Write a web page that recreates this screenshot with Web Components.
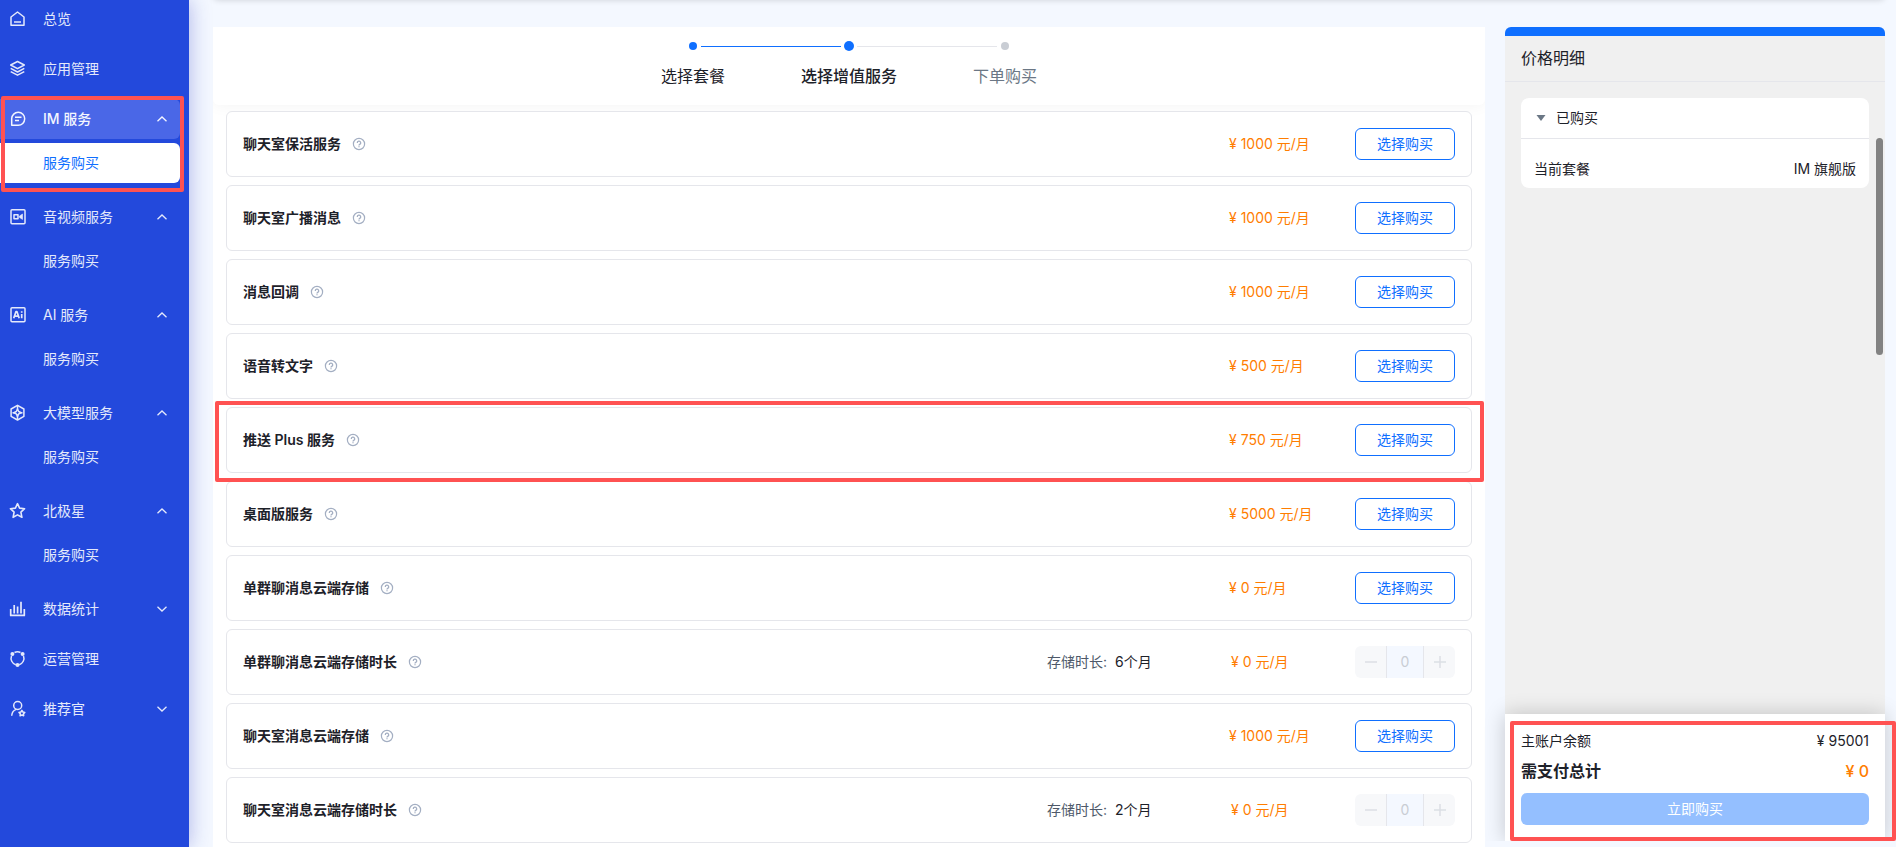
<!DOCTYPE html>
<html lang="zh-CN">
<head>
<meta charset="utf-8">
<title>服务购买</title>
<style>
  html, body {
    height: 100%;
    margin: 0;
  }
  body {
    font-family: Inter, "Noto Sans CJK SC", sans-serif;
    font-size: 14px;
    line-height: 22px;
    color: #1d2129;
    background: #f4f8ff;
    overflow: hidden;
  }
</style>
</head>
<body>
<console-layout>
  <side-nav slot="nav">
    <nav-item icon="home">总览</nav-item>
    <nav-item icon="layers">应用管理</nav-item>
    <nav-group icon="chat" label="IM 服务" open active marked><a-sub current>服务购买</a-sub></nav-group>
    <nav-group icon="video" label="音视频服务" open><a-sub>服务购买</a-sub></nav-group>
    <nav-group icon="ai" label="AI 服务" open><a-sub>服务购买</a-sub></nav-group>
    <nav-group icon="model" label="大模型服务" open><a-sub>服务购买</a-sub></nav-group>
    <nav-group icon="star" label="北极星" open><a-sub>服务购买</a-sub></nav-group>
    <nav-group icon="chart" label="数据统计"></nav-group>
    <nav-item icon="cycle">运营管理</nav-item>
    <nav-group icon="user" label="推荐官"></nav-group>
  </side-nav>

  <step-bar>
    <step-dot state="done">选择套餐</step-dot>
    <step-dot state="current">选择增值服务</step-dot>
    <step-dot state="wait">下单购买</step-dot>
  </step-bar>
  <service-list>
    <service-card price="1000">聊天室保活服务</service-card>
    <service-card price="1000">聊天室广播消息</service-card>
    <service-card price="1000">消息回调</service-card>
    <service-card price="500">语音转文字</service-card>
    <service-card price="750" marked>推送 Plus 服务</service-card>
    <service-card price="5000">桌面版服务</service-card>
    <service-card price="0">单群聊消息云端存储</service-card>
    <service-card price="0" duration="6个月">单群聊消息云端存储时长</service-card>
    <service-card price="1000">聊天室消息云端存储</service-card>
    <service-card price="0" duration="2个月">聊天室消息云端存储时长</service-card>
  </service-list>

  <price-panel slot="aside" heading="价格明细">
    <bought-card heading="已购买">
      <span slot="name">当前套餐</span>
      <span slot="value">IM 旗舰版</span>
    </bought-card>
    <pay-footer slot="footer" balance="95001" total="0"></pay-footer>
  </price-panel>
</console-layout>

<script>
const ICONS = {
  home: '<path d="M2 7 8.500 2 15 7v8.200H2z"/><path d="M5 12h7"/>',
  layers: '<path d="M8.500 1.500 15.300 5 8.500 8.700 1.700 5z"/><path d="M1.700 8.400 8.500 12l6.800-3.600M1.700 11.600l6.800 3.600 6.800-3.600"/>',
  chat: '<path d="M2.700 15.300V8.600a6.500 6.500 0 1 1 6.500 6.700z"/><path d="M6 7.200h6.500M6 10.400h4"/>',
  video: '<rect x="2" y="1.700" width="14" height="14" rx="1"/><path d="M5 6.700h4v4H5z"/><path d="M13.500 6v5.400l-3-2v-1.400z" fill="currentColor" stroke-width=".6"/>',
  ai: '<rect x="2" y="1.700" width="14" height="14" rx="1"/><path d="M4.700 12.200 7 5.500h.9l2.300 6.700M5.500 10.200h3.900M12.700 8v4.200M12.700 5.200v1.500" stroke-width="1.700"/>',
  model: '<path d="M8.500 1.300 14.900 5v7.300L8.500 16l-6.400-3.700V5z"/><path d="M8.500 1.500v4M8.500 12v4M3.500 8.700h3M10.500 8.700h3"/><path d="M8.500 5 9.700 7.500 12.200 8.700 9.700 9.900 8.500 12.400 7.300 9.900 4.800 8.700 7.300 7.500z"/>',
  star: '<path d="M8.500 1.600 10.600 6.100 15.600 6.700 11.900 10.100 12.900 15.300 8.500 12.900 4.100 15.300 5.100 10.100 1.400 6.700 6.400 6.100z" stroke-width="1.600"/>',
  chart: '<path d="M1.700 9v6.400h13.600V9M5.200 13.400V5M8.600 13.400V6.500M12 13.400V1.700" stroke-width="1.700"/>',
  cycle: '<path d="M5.500 2.500a6.600 6.600 0 0 1 6 0M14.500 6a6.600 6.600 0 0 1-4.300 8.700M6.800 14.700A6.600 6.600 0 0 1 2.500 6"/><g fill="currentColor" stroke="none"><circle cx="3.400" cy="4" r="2"/><circle cx="13.600" cy="4" r="2"/><circle cx="8.500" cy="15" r="2"/></g>',
  user: '<circle cx="8.700" cy="5.500" r="4"/><path d="M2.700 15.800c.2-3.400 2-5.600 4.700-6.400"/><path d="M12.900 10.300 13.900 12 15.800 12.400 14.500 13.800 14.700 15.700 12.900 15 11.100 15.700 11.300 13.800 10 12.400 11.900 12z"/>'
};

function icon(name) {
  return `<svg class="icon" viewBox="0 0 18 18" width="18" height="18" fill="none" stroke="currentColor" stroke-width="1.500" stroke-linejoin="round" aria-hidden="true">${ICONS[name]}</svg>`;
}

// Shared by every nav row, whether it is a link or an expander
const ROW_STYLE = `
  .row {
    box-sizing: border-box;
    display: flex;
    align-items: center;
    width: 100%;
    height: 40px;
    padding: 0 13px 0 9px;
    border: 0;
    border-radius: 0 6px 6px 0;
    background: none;
    color: #e4e9fb;
    font: inherit;
    text-align: left;
    text-decoration: none;
    cursor: pointer;
  }
  .icon {
    flex: none;
    margin-right: 16px;
  }
`;

// Red frame that highlights a part of the page
const MARK_STYLE = `
  .mark {
    position: absolute;
    border: 4px solid #ff5252;
    border-radius: 2px;
    pointer-events: none;
    z-index: 5;
  }
`;

class BaseElement extends HTMLElement {
  constructor() {
    super();
    this.attachShadow({ mode: 'open' });
  }

  connectedCallback() {
    this.shadowRoot.innerHTML = this.template();
  }
}

class ConsoleLayout extends BaseElement {
  template() {
    return `
      <style>
        :host {
          display: grid;
          grid-template-columns: 189px minmax(0, 1fr);
          height: 100vh;
        }
        .page {
          box-sizing: border-box;
          display: grid;
          grid-template-columns: minmax(0, 1fr) 380px;
          grid-template-rows: minmax(0, 1fr);
          gap: 20px;
          height: 100vh;
          padding: 27px 11px 0 24px;
          position: relative;
        }
        .topbar {
          position: absolute;
          left: 24px;
          right: 11px;
          top: -10px;
          height: 10px;
          border-radius: 6px;
          box-shadow: 0 0 6px rgba(0, 0, 0, 0.16);
        }
        main {
          background: #fff;
          overflow: hidden;
        }
        aside {
          min-height: 0;
          padding-bottom: 6px;
        }
      </style>
      <slot name="nav"></slot>
      <div class="page">
        <div class="topbar"></div>
        <main><slot></slot></main>
        <aside><slot name="aside"></slot></aside>
      </div>
    `;
  }
}

class SideNav extends BaseElement {
  template() {
    return `
      <style>
        :host {
          display: block;
          background: #2349dc;
          box-shadow: 0 0 20px rgba(35, 50, 190, 0.35);
          position: relative;
          z-index: 1;
        }
        nav {
          display: flex;
          flex-direction: column;
          gap: 10px;
          margin-top: -1px;
          padding-right: 9px;
        }
      </style>
      <nav><slot></slot></nav>
    `;
  }
}

class NavItem extends BaseElement {
  template() {
    return `
      <style>
        :host { display: block; }
        ${ROW_STYLE}
      </style>
      <a class="row" href="#">${icon(this.getAttribute('icon'))}<slot></slot></a>
    `;
  }
}

class NavGroup extends BaseElement {
  template() {
    const open = this.hasAttribute('open');
    return `
      <style>
        :host {
          display: block;
          position: relative;
        }
        :host([open]) { padding-bottom: 4px; }
        :host(:not([open])) slot { display: none; }
        ${ROW_STYLE}
        ${MARK_STYLE}
        :host([active]) .row {
          background: #4a67e7;
          color: #f4f6ff;
          font-weight: 500;
        }
        .label { flex: 1; }
        .mark { inset: -3px -4px -5px 1px; }
      </style>
      <button class="row" type="button" aria-expanded="${open}">
        ${icon(this.getAttribute('icon'))}
        <span class="label">${this.getAttribute('label')}</span>
        <svg width="10" height="6" viewBox="0 0 10 6" fill="none" stroke="currentColor" stroke-width="1.300" aria-hidden="true">
          <path d="${open ? 'M.5 5.300 5 1l4.500 4.300' : 'M.5.700 5 5 9.500.700'}"/>
        </svg>
      </button>
      <slot></slot>
      ${this.hasAttribute('marked') ? '<div class="mark"></div>' : ''}
    `;
  }

  connectedCallback() {
    super.connectedCallback();
    this.shadowRoot.querySelector('button').addEventListener('click', () => {
      this.toggleAttribute('open');
      this.connectedCallback();
    });
  }
}

class SubLink extends BaseElement {
  template() {
    return `
      <style>
        :host {
          display: block;
          margin-top: 4px;
        }
        a {
          display: block;
          padding: 9px 0 9px 43px;
          border-radius: 0 6px 6px 0;
          color: #e4e9fb;
          text-decoration: none;
        }
        :host([current]) a {
          background: #fff;
          color: #0f6fff;
        }
      </style>
      <a href="#"><slot></slot></a>
    `;
  }
}

class StepBar extends BaseElement {
  template() {
    return `
      <style>
        :host {
          display: grid;
          grid-template-columns: repeat(3, 156px);
          justify-content: center;
          padding: 14px 0 18px;
          border-radius: 0 0 6px 6px;
          box-shadow: 0 0 16px rgba(0, 0, 0, 0.05);
          margin-bottom: 6px;
        }
      </style>
      <slot></slot>
    `;
  }
}

class StepDot extends BaseElement {
  template() {
    return `
      <style>
        :host {
          display: grid;
          justify-items: center;
          grid-template-rows: 10px auto;
          row-gap: 14px;
          font-size: 16px;
          line-height: 22px;
          position: relative;
        }
        i {
          align-self: center;
          width: 8px;
          height: 8px;
          border-radius: 50%;
          background: #0f6fff;
        }
        /* connector to the next step */
        :host(:not(:last-child))::after {
          content: "";
          position: absolute;
          top: 5px;
          left: calc(50% + 8px);
          width: calc(100% - 16px);
          height: 1px;
          background: #e5e6eb;
        }
        :host([state="done"])::after { background: #0f6fff !important; }
        :host([state="current"]) { font-weight: 500; }
        :host([state="current"]) i {
          width: 10px;
          height: 10px;
        }
        :host([state="wait"]) { color: #6b7785; }
        :host([state="wait"]) i { background: #c9cdd4; }
      </style>
      <i></i>
      <span><slot></slot></span>
    `;
  }
}

class ServiceList extends BaseElement {
  template() {
    return `
      <style>
        :host {
          display: grid;
          gap: 8px;
          padding: 0 13px;
        }
      </style>
      <slot></slot>
    `;
  }
}

class ServiceCard extends BaseElement {
  action() {
    if (!this.hasAttribute('duration')) {
      return '<button class="buy" type="button">选择购买</button>';
    }
    return `
      <div class="stepper">
        <button type="button" disabled aria-label="减少"><svg width="12" height="12" viewBox="0 0 12 12" stroke="currentColor" stroke-width="1.500"><path d="M0 6h12"/></svg></button>
        <input type="text" value="0" disabled aria-label="数量">
        <button type="button" disabled aria-label="增加"><svg width="12" height="12" viewBox="0 0 12 12" stroke="currentColor" stroke-width="1.500"><path d="M0 6h12M6 0v12"/></svg></button>
      </div>
    `;
  }

  template() {
    const duration = this.getAttribute('duration');
    return `
      <style>
        :host {
          display: flex;
          align-items: center;
          padding: 16px;
          border: 1px solid #e5e6eb;
          border-radius: 6px;
          background: #fff;
          position: relative;
        }
        ${MARK_STYLE}
        .mark { inset: -7px -13px -10px -12px; }
        .name {
          display: flex;
          align-items: center;
          flex: 1;
          gap: 11px;
          font-weight: 600;
        }
        .name svg { color: #a3aec2; }
        .duration {
          display: flex;
          gap: 8px;
          width: 184px;
        }
        .duration span { color: #4e5969; }
        .price {
          width: 126px;
          color: #ff7d00;
        }
        .duration + .price { width: 124px; }
        .buy {
          width: 100px;
          height: 32px;
          padding: 0;
          border: 1px solid #0f6fff;
          border-radius: 6px;
          background: #fff;
          color: #0f6fff;
          font: inherit;
          cursor: pointer;
        }
        .stepper {
          display: grid;
          grid-template-columns: 31px 38px 31px;
          height: 32px;
          border-radius: 6px;
          background: #f7f8fa;
          overflow: hidden;
        }
        .stepper button {
          display: grid;
          place-items: center;
          padding: 0;
          border: 0;
          background: none;
          color: #dcdfe5;
        }
        .stepper input {
          box-sizing: border-box;
          width: 100%;
          padding: 0;
          border: solid #e5e6eb;
          border-width: 0 1px;
          background: #f4f8ff;
          color: #c9cdd4;
          font: inherit;
          text-align: center;
        }
      </style>
      <div class="name">
        <span><slot></slot></span>
        <svg width="14" height="14" viewBox="0 0 14 14" fill="none" stroke="currentColor" aria-hidden="true">
          <circle cx="7" cy="7" r="5.600" stroke-width="1.200"/>
          <path d="M5.300 5.900a1.700 1.700 0 1 1 2.400 1.500Q7 7.700 7 8.500M7 9.300v1" stroke-width="1.300"/>
        </svg>
      </div>
      ${duration ? `<div class="duration"><span>存储时长:</span>${duration}</div>` : ''}
      <div class="price">¥ ${this.getAttribute('price')} 元/月</div>
      ${this.action()}
      ${this.hasAttribute('marked') ? '<div class="mark"></div>' : ''}
    `;
  }
}

class PricePanel extends BaseElement {
  template() {
    return `
      <style>
        :host {
          display: flex;
          flex-direction: column;
          height: 100%;
          border-radius: 6px 6px 0 0;
          background: #f0f0f0;
        }
        h2 {
          margin: 0;
          padding: 11px 16px 12px;
          border-top: 9px solid #0f6fff;
          border-bottom: 1px solid #e5e6eb;
          border-radius: 6px 6px 0 0;
          font-size: 16px;
          font-weight: 400;
          line-height: 22px;
        }
        .body {
          flex: 1;
          padding: 16px;
          position: relative;
        }
        .thumb {
          position: absolute;
          top: 56px;
          right: 2px;
          width: 7px;
          height: 217px;
          border-radius: 4px;
          background: #828282;
        }
      </style>
      <h2>${this.getAttribute('heading')}</h2>
      <div class="body">
        <slot></slot>
        <div class="thumb"></div>
      </div>
      <slot name="footer"></slot>
    `;
  }
}

class BoughtCard extends BaseElement {
  template() {
    return `
      <style>
        :host {
          display: block;
          border-radius: 8px;
          background: #fff;
        }
        button {
          display: flex;
          align-items: center;
          gap: 10px;
          width: 100%;
          height: 41px;
          padding: 0 15px;
          border: 0;
          border-bottom: 1px solid #e5e6eb;
          background: none;
          color: inherit;
          font: inherit;
        }
        .item {
          display: flex;
          justify-content: space-between;
          padding: 19px 13px 8px;
        }
      </style>
      <button type="button" aria-expanded="true">
        <svg width="10" height="6" viewBox="0 0 10 6" fill="#6b7785" aria-hidden="true"><path d="M.5 0h9L5 6z"/></svg>
        ${this.getAttribute('heading')}
      </button>
      <div class="item"><slot name="name"></slot><slot name="value"></slot></div>
    `;
  }
}

class PayFooter extends BaseElement {
  template() {
    return `
      <style>
        :host {
          display: block;
          padding: 16px;
          background: #fff;
          box-shadow: 0 0 20px rgba(0, 0, 0, 0.2);
          clip-path: inset(-24px -24px 0 -24px);
          position: relative;
        }
        ${MARK_STYLE}
        .mark { inset: 7px -11px 0 5px; }
        .line {
          display: flex;
          justify-content: space-between;
          margin-bottom: 8px;
        }
        .total {
          margin-bottom: 11px;
          font-size: 16px;
          font-weight: 600;
        }
        .total b {
          color: #ff7d00;
          font-weight: 500;
        }
        button {
          display: block;
          width: 100%;
          height: 32px;
          border: 0;
          border-radius: 6px;
          background: #94bfff;
          color: #fff;
          font: inherit;
        }
      </style>
      <div class="line"><span>主账户余额</span><span>¥ ${this.getAttribute('balance')}</span></div>
      <div class="line total"><span>需支付总计</span><b>¥ ${this.getAttribute('total')}</b></div>
      <button type="button" disabled>立即购买</button>
      <div class="mark"></div>
    `;
  }
}

customElements.define('console-layout', ConsoleLayout);
customElements.define('side-nav', SideNav);
customElements.define('nav-item', NavItem);
customElements.define('nav-group', NavGroup);
customElements.define('a-sub', SubLink);
customElements.define('step-bar', StepBar);
customElements.define('step-dot', StepDot);
customElements.define('service-list', ServiceList);
customElements.define('service-card', ServiceCard);
customElements.define('price-panel', PricePanel);
customElements.define('bought-card', BoughtCard);
customElements.define('pay-footer', PayFooter);
</script>
</body>
</html>
